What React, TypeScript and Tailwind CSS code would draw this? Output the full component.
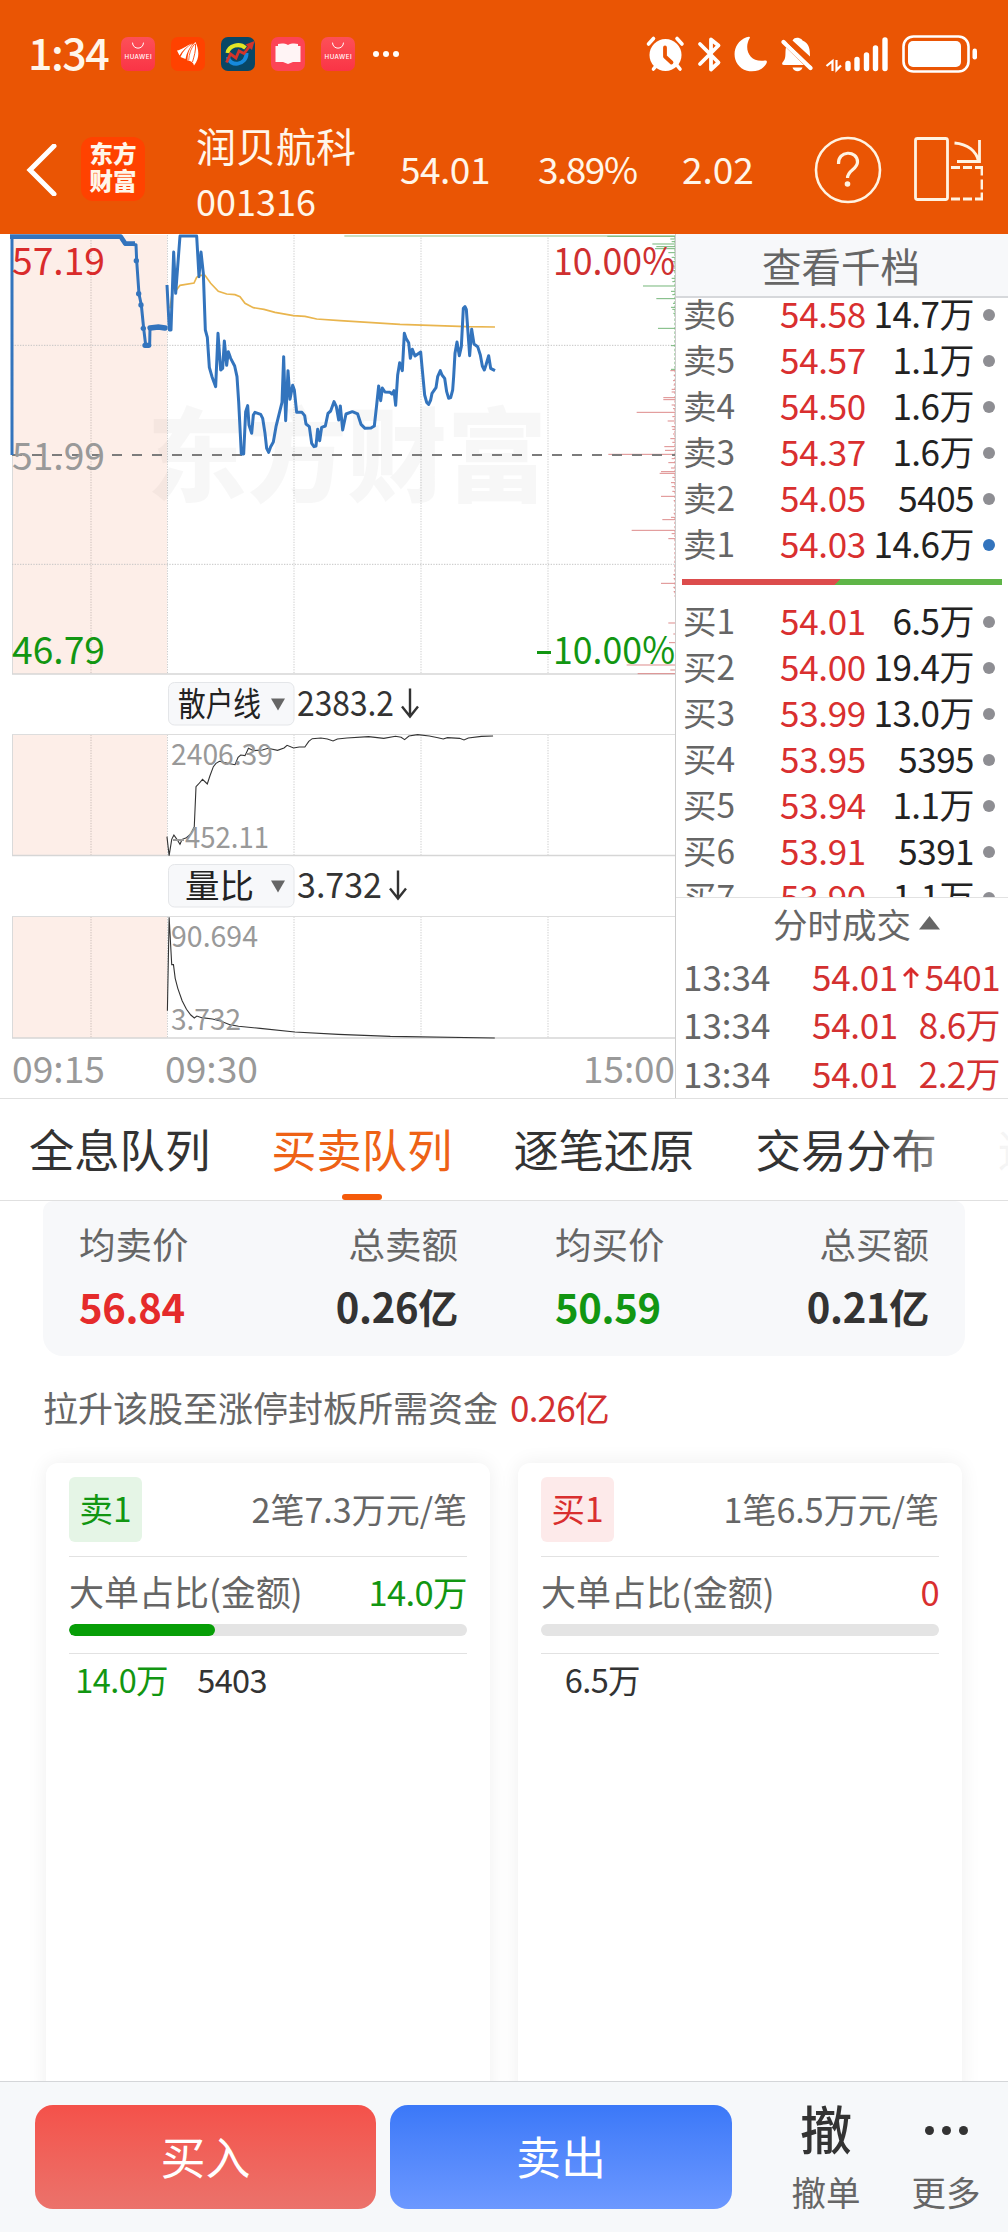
import React from "react";

const FONT = "font-['Noto_Sans_CJK_SC',sans-serif]";

type Level = { label: string; price: string; volume: string; active?: boolean };

const SELLS: Level[] = [
  { label: "卖6", price: "54.58", volume: "14.7万" },
  { label: "卖5", price: "54.57", volume: "1.1万" },
  { label: "卖4", price: "54.50", volume: "1.6万" },
  { label: "卖3", price: "54.37", volume: "1.6万" },
  { label: "卖2", price: "54.05", volume: "5405" },
  { label: "卖1", price: "54.03", volume: "14.6万", active: true },
];

const BUYS: Level[] = [
  { label: "买1", price: "54.01", volume: "6.5万" },
  { label: "买2", price: "54.00", volume: "19.4万" },
  { label: "买3", price: "53.99", volume: "13.0万" },
  { label: "买4", price: "53.95", volume: "5395" },
  { label: "买5", price: "53.94", volume: "1.1万" },
  { label: "买6", price: "53.91", volume: "5391" },
  { label: "买7", price: "53.90", volume: "1.1万" },
];

const TRADES = [
  { time: "13:34", price: "54.01", arrow: true, volume: "5401" },
  { time: "13:34", price: "54.01", arrow: false, volume: "8.6万" },
  { time: "13:34", price: "54.01", arrow: false, volume: "2.2万" },
];

/* Horizontal volume-by-price bars: [y, length] in thirds of a pixel. */
const GREEN_BARS: number[][] = [
  [19, 203], [27, 14], [35, 10], [42, 68], [50, 56], [56, 60], [68, 20], [82, 10], [95, 14], [108, 8], [122, 10],
  [145, 10], [155, 8], [168, 96], [184, 12], [194, 8], [206, 56], [220, 6], [232, 12], [238, 8], [250, 5],
  [295, 51], [347, 12], [418, 12],
];
const RED_BARS: number[][] = [
  [422, 14], [436, 4], [452, 6], [465, 4], [478, 10], [486, 10], [503, 35], [509, 35], [525, 10], [536, 6], [547, 115], [560, 8],
  [573, 22], [590, 10], [598, 8], [612, 6], [626, 14], [637, 8], [650, 32], [661, 30], [673, 200], [686, 10],
  [698, 20], [714, 12], [725, 42], [730, 46], [742, 8], [758, 12], [770, 10], [784, 8], [799, 42], [812, 4],
  [850, 4], [862, 12], [869, 38], [901, 130], [911, 10], [926, 20], [1034, 5], [1046, 4], [1060, 42], [1072, 5], [1085, 4],
  [1179, 20], [1212, 5], [1238, 18], [1305, 145], [1320, 14], [1331, 112],
];

function HuaweiIcon() {
  return (
    <svg className="size-[34px]" viewBox="0 0 34 34">
      <defs>
        <linearGradient id="hw" x1="0" y1="0" x2="0" y2="1">
          <stop offset="0" stopColor="#fd5058" />
          <stop offset="1" stopColor="#fa3446" />
        </linearGradient>
      </defs>
      <rect width="34" height="34" rx="7" fill="url(#hw)" />
      <path d="M11.5 6c.3 7 10.7 7 11 0" fill="none" stroke="#fff" strokeWidth="1" strokeLinecap="round" />
      <text x="3.6" y="22" fontSize="6.2" textLength="27" fontFamily="Inter, sans-serif" fontWeight="500" fill="#fff">HUAWEI</text>
    </svg>
  );
}

function StatusBar() {
  return (
    <div className="flex h-[108px] items-center pl-[28px] pr-[31px]">
      <div className="flex w-[93px] translate-y-[-3px] text-[43px] font-medium leading-none">
        <span className="tracking-[-1.5px]">1:34</span>
      </div>
      <div className="flex items-center gap-[16px]">
        <HuaweiIcon />
        <svg className="size-[34px]" viewBox="0 0 34 34">
          <rect width="34" height="34" rx="7" fill="#ff4200" />
          <path d="M6 13.500c4-.5 9-4.500 15-7-6 3.500-10 7.500-12.500 12Z" fill="#fff" />
          <path d="M9.500 20C12 14 16 9.500 22 6.500 18.500 10.500 15.500 16 14.500 22Z" fill="#fff" />
          <path d="M16.500 23.500C16.500 15 19.500 9.500 24.500 5c3 6.500 5 16-1.500 23.500-.5-3-3-4.500-6.500-5Z" fill="#fff" />
          <path d="M24 6.500c-4 4.500-6 10-6.300 17" stroke="#ff4200" strokeWidth=".8" fill="none" />
          <path d="M24.500 7c.5 7-1.500 12.500-3 18" stroke="#ff4200" strokeWidth=".9" fill="none" />
        </svg>
        <svg className="size-[34px]" viewBox="0 0 34 34">
          <rect width="34" height="34" rx="7" fill="#084766" />
          <path d="M6.500 16a10.500 9 0 0 1 18-5" fill="none" stroke="#e2e626" strokeWidth="4" />
          <path d="M25.500 16c0 13-17 14-18.500 4" fill="none" stroke="#1689dc" strokeWidth="4" />
          <path d="M5.500 25.500 9.500 17l5.500 4 3-7 5 2.500 7-9" fill="none" stroke="#d3342a" strokeWidth="2.800" />
          <path d="m33.500 4-2.500 9-6.500-5.500Z" fill="#d3342a" />
        </svg>
        <svg className="size-[34px]" viewBox="0 0 34 34">
          <rect width="34" height="34" rx="7" fill="#fc4456" />
          <path d="M4.500 9h2.500V7c3-.8 7-.8 10 1 3-1.800 7-1.800 10-1v2h2.500v16H22l-5 2-5-2H4.500Z" fill="#fff4f5" />
        </svg>
        <HuaweiIcon />
      </div>
      <div className="ml-[18px] flex gap-[4px]">
        <i className="size-[6px] rounded-full bg-white" />
        <i className="size-[6px] rounded-full bg-white" />
        <i className="size-[6px] rounded-full bg-white" />
      </div>
      <svg className="ml-auto h-[40px] w-[332px]" viewBox="645 33 332 40" fill="#fff">
        {/* alarm */}
        <circle cx="665.500" cy="54" r="16" />
        <path d="m648.500 43 5-5.500m28.500 5.500-5-5.500m-23.500 30.500 4-5m22.500 5-4-5" stroke="#fff" strokeWidth="3.600" strokeLinecap="round" />
        <path d="M665 46.500v9l6.500 6" fill="none" stroke="#ea5504" strokeWidth="3.800" strokeLinecap="round" strokeLinejoin="round" />
        {/* bluetooth */}
        <path d="m700 43 18.500 18.500-7.500 7V38.500l7.500 6L700 63" fill="none" stroke="#fff" strokeWidth="3.800" strokeLinecap="round" strokeLinejoin="round" />
        {/* moon */}
        <path d="M749.500 37.500c1.300-1.800-.5-2.400-3-1.200-16 6-16 28.500.5 33.500 9 2 16.500-1.800 19.500-7.500 1-2.300 0-3-2-2.700-15 2.200-21-11.600-15-22.100Z" />
        {/* muted bell */}
        <path d="M792.500 39.500c3-5.500 10-1.500 10 0 7 3 7.500 9 7.500 16Z" />
        <path d="M786 46.500 804 64h-20c-4-.5-.5-3.500.5-5.500 1.500-3 .5-8 1.500-12Z" />
        <path d="M792.500 66.500h10c-1.500 5-8.500 5-10 0Z" />
        <path d="m783.500 41 27 26" stroke="#fff" strokeWidth="4.400" strokeLinecap="round" />
        <path d="m788 41 23 22" stroke="#ea5504" strokeWidth="1.800" />
        {/* signal */}
        <path d="M832.500 70V60l-6 5m10-6v10l4.500-4.500" fill="none" stroke="#fff" strokeWidth="2.200" />
        <path d="M848 62.500v5M857 58.500v9M866.500 54v13.500M875.500 47v20.500M885 39v28.500" stroke="#fff" strokeWidth="5.400" strokeLinecap="round" />
        {/* battery */}
        <rect x="903.500" y="35.500" width="65" height="35" rx="10" fill="none" stroke="#fff" strokeWidth="2.600" />
        <rect x="908" y="40" width="53" height="26" rx="5" />
        <rect x="972.500" y="47.500" width="4.500" height="11" rx="2.200" />
      </svg>
    </div>
  );
}

function TitleBar() {
  return (
    <div className="flex h-[126px] items-center pb-[4px] pl-[26px] pr-[25px]">
      <svg className="h-[52px] w-[31px] translate-y-[1px]" viewBox="0 0 31 52" fill="none" stroke="#fff" strokeWidth="5">
        <path d="M28 2 4 26l24 24" strokeLinecap="round" />
      </svg>
      <div className="ml-[24px] flex size-[64px] flex-col items-center justify-center rounded-[12px] bg-[#ff4200] text-[23.500px] font-black leading-[27px]">
        <span className="translate-y-[-2px]">东方</span>
        <span className="translate-y-[-2px]">财富</span>
      </div>
      <div className="ml-[51px] flex w-[204px] translate-y-[3px] flex-col">
        <span className="text-[40px] leading-[56px]">润贝航科</span>
        <span className="text-[36px] leading-[54px]">001316</span>
      </div>
      <span className="w-[138px] text-[37px] tracking-[-0.500px]">54.01</span>
      <span className="w-[144px] text-[37px] tracking-[-1.500px]">3.89%</span>
      <span className="w-[132px] text-[37px]">2.02</span>
      <svg className="size-[68px] translate-y-[1px]" viewBox="0 0 68 68" fill="none" stroke="#fff3e2" strokeWidth="2.600">
        <circle cx="34" cy="34" r="32" />
        <path d="M24.500 28c-1-14 19-14 19-2 0 7.500-10 8-10 16" strokeWidth="3.200" />
        <circle cx="33.500" cy="48" r="2.800" fill="#fff3e2" stroke="none" />
      </svg>
      <svg className="ml-auto h-[66px] w-[70px]" viewBox="913 136 70 66" fill="none" stroke="#fff3e2" strokeWidth="2.800">
        <rect x="915.500" y="138.500" width="32" height="61" rx="2" />
        <path d="M954.500 143c13 1 22 8 24 18.500M979.500 140v21.500h-22.500" />
        <path d="M951 167.500h9m3 0h9m3 0h7v8m0 4v10m0 3v6.500h-7m-3 0h-9m-3 0h-9" />
      </svg>
    </div>
  );
}

type LabelProps = { x: number; y: number; w: number; size: number; fill: string; children: string };
function ChartLabel({ x, y, w, size, fill, children }: LabelProps) {
  return (
    <text x={x} y={y} fontSize={size} textLength={w} lengthAdjust="spacingAndGlyphs" fill={fill}>
      {children}
    </text>
  );
}

function Plot({ top, bottom }: { top: number; bottom: number }) {
  return (
    <g>
      <rect x="12" y={top} width="155" height={bottom - top} fill="#fdeee8" />
      {[91, 167.5, 294, 421, 548].map((x) => (
        <path key={x} d={`M${x} ${top}V${bottom}`} stroke="#000" strokeOpacity=".2" strokeDasharray="1.300 1.300" />
      ))}
      <path d={`M12.500 ${top}V${bottom}`} stroke="#dadada" />
      <path d={`M12 ${bottom}H675`} stroke="#d6d6d6" strokeWidth="1.600" />
    </g>
  );
}

function ParamPill({ y, name, x, w }: { y: number; name: string; x: number; w: number }) {
  return (
    <g>
      <rect x="168.500" y={y} width="125.500" height="42.500" rx="6" fill="#f7f8fa" stroke="#e4e6e9" />
      <ChartLabel x={x} y={y + 33} w={w} size={33} fill="#222">{name}</ChartLabel>
      <path d={`M271 ${y + 16}h14l-7 12Z`} fill="#666" />
    </g>
  );
}

const PRICE =
  "M36 675V20H360L376 42L408 44L410 92L417 192L424 225L431 295L437 345H449L450 294L475 292L497 294M501 165L508 300H513L521 66L527 190L540 18H590L597 140L603 66L610 130L616 300L622 322L628 412L636 440L647 470L654 310L662 420L668 415L673 333L680 406L685 365L692 385L704 408L711 440L716 515L724 672H731L737 545L743 527L747 585L755 610L760 555L765 547L782 553L788 565L795 610L800 655L806 667L812 650L820 636L828 590L846 517L851 380L857 572L864 422L870 508L878 466L883 480L890 547H906L914 557L918 582L928 590L935 640L942 650L948 648L953 598L959 632L965 592L976 588L984 550L992 543L1002 515L1009 530L1016 570L1021 528L1028 600L1038 552L1057 545L1073 552L1083 583L1095 595L1113 594L1123 588L1130 525L1136 468L1142 512L1147 474L1155 486L1170 487L1176 492L1182 482L1187 526L1193 435L1199 398L1207 422L1213 310L1218 325L1226 338L1231 385L1237 358L1245 378L1262 366L1266 410L1274 495L1280 517L1286 523L1292 510L1296 490L1308 473L1313 440L1321 422L1326 435L1334 445L1340 485L1346 505L1352 503L1358 480L1361 440L1365 370L1371 336L1378 377L1384 350L1390 235L1395 230L1399 238L1409 377L1415 298L1422 342L1433 350L1441 375L1447 408L1453 420L1458 405L1466 377L1472 415L1485 422";

function Charts() {
  return (
    <svg className={`block h-[864px] w-[675px] shrink-0 overflow-visible ${FONT}`} viewBox="0 234 675 864" fill="none">
      <Plot top={235} bottom={674} />
      <text x="147" y="494" fontSize="102" textLength="400" lengthAdjust="spacingAndGlyphs" fontWeight="900" fill="#000" fillOpacity=".033">东方财富</text>
      <g transform="translate(0 230) scale(.33333)">
        <path d="M36 346H2025M36 1003H2025" stroke="#c4c4c4" strokeWidth="3" strokeDasharray="4 4" />
        <path d="M1033 18H2025" stroke="#c9dfc2" strokeWidth="6" />
        {GREEN_BARS.map(([y, n]) => (
          <path key={y} d={`M${2025 - n} ${y}H2025`} stroke="#74b678" strokeWidth="3" />
        ))}
        {RED_BARS.map(([y, n]) => (
          <path key={y} d={`M${2025 - n} ${y}H2025`} stroke="#dd8b8b" strokeWidth="3" />
        ))}
        <path d="M2024 18V420" stroke="#7dbb80" strokeWidth="2" strokeDasharray="8 5" />
        <path d="M2024 420V1100" stroke="#dd9090" strokeWidth="2" strokeDasharray="7 6" />
        <path d="M36 675H2025" stroke="#7c7c7c" strokeWidth="6" strokeDasharray="30 30" />
        <path d="M510 235L520 165L528 182L540 166L582 159L590 142L600 136H615L632 160L655 184L680 192L705 194L720 200L735 220L760 233L792 238L825 247L880 257L915 259L950 267L1020 272L1200 283L1400 290L1485 291" stroke="#e9b54e" strokeWidth="5" />
        <path d={PRICE} stroke="#3374bd" strokeWidth="9" strokeLinejoin="round" />
        <path d="M30 20H362L376 41H405" stroke="#3374bd" strokeWidth="14" strokeLinejoin="round" />
        <path d="M450 294L475 291L495 294M435 346H446" stroke="#3374bd" strokeWidth="16" strokeLinecap="round" />
        {[[409, 92], [416, 191], [423, 225], [430, 295]].map(([x, y]) => (
          <circle key={x} cx={x} cy={y} r="8" fill="#3374bd" />
        ))}
      </g>
      <ChartLabel x={12} y={275} w={93} size={38} fill="#d92b2b">57.19</ChartLabel>
      <ChartLabel x={12} y={470} w={93} size={38} fill="#999">51.99</ChartLabel>
      <ChartLabel x={12} y={664} w={93} size={38} fill="#129612">46.79</ChartLabel>
      <ChartLabel x={553} y={275} w={122} size={38} fill="#cf3030">10.00%</ChartLabel>
      <path d="M537 652.500h14" stroke="#129612" strokeWidth="3" />
      <ChartLabel x={553} y={664} w={122} size={38} fill="#129612">10.00%</ChartLabel>

      <ParamPill y={682.5} name="散户线" x={178} w={83} />
      <ChartLabel x={297} y={716} w={97} size={35} fill="#333">2383.2</ChartLabel>
      <path d="M410 688.500v28m-8-10 8 10 8-10" stroke="#333" strokeWidth="2.400" />
      <Plot top={734.5} bottom={855.5} />
      <path d="M12 734.500H675" stroke="#ddd" />
      <g transform="translate(0 670) scale(.43365 .33333)">
        <path vectorEffect="non-scaling-stroke" d="M385 500L390 557L396 508L401 495L408 508L415 523L420 508L430 503L440 492L448 470L452 350L458 342L467 328L478 342L484 318L492 290L498 280L506 274L530 281L542 284L549 262L555 255L565 257L573 235L585 242L605 240L618 235L640 241L655 234L662 226L677 234L690 231H703L712 214L720 206L740 204L755 207L768 213L778 207L800 204L850 200L885 205L912 199L925 202L933 209L943 198L963 194L990 198L1010 203L1022 207L1032 203L1060 205L1070 210L1080 204L1110 199L1137 198" stroke="#333" strokeWidth="1.100" />
      </g>
      <ChartLabel x={171} y={765} w={102} size={29} fill="#999">2406.39</ChartLabel>
      <path d="M173 840h11" stroke="#999" strokeWidth="2" />
      <ChartLabel x={185} y={848} w={84} size={29} fill="#999">452.11</ChartLabel>

      <ParamPill y={864.5} name="量比" x={185} w={69} />
      <ChartLabel x={297} y={898} w={85} size={35} fill="#333">3.732</ChartLabel>
      <path d="M398 870.500v28m-8-10 8 10 8-10" stroke="#333" strokeWidth="2.400" />
      <Plot top={916.5} bottom={1038} />
      <path d="M12 916.500H675" stroke="#ddd" />
      <g transform="translate(0 670) scale(.43365 .33333)">
        <path vectorEffect="non-scaling-stroke" d="M386 1022L390 742L396 884H400L404 925L410 955L420 992L430 1018L440 1035L448 1044L454 1038L465 1043L490 1047L510 1054L530 1064L550 1069L600 1075L680 1086L780 1093L900 1099L1141 1104" stroke="#333" strokeWidth="1.100" />
      </g>
      <ChartLabel x={171} y={947} w={87} size={29} fill="#999">90.694</ChartLabel>
      <ChartLabel x={171} y={1030} w={70} size={29} fill="#999">3.732</ChartLabel>

      <ChartLabel x={12} y={1083} w={93} size={37} fill="#999">09:15</ChartLabel>
      <ChartLabel x={165} y={1083} w={93} size={37} fill="#999">09:30</ChartLabel>
      <ChartLabel x={583} y={1083} w={92} size={37} fill="#999">15:00</ChartLabel>
    </svg>
  );
}

function LevelRow({ level }: { level: Level }) {
  return (
    <div className="flex h-[46px] shrink-0 items-center pl-[7px] pr-[13px] text-[35px] leading-[46px]">
      <span className="w-[97px] -translate-y-[2px] text-[33.500px] text-[#666]">{level.label}</span>
      <span className="-translate-y-[2px] tracking-[-0.300px] text-[#d92f2f]">{level.price}</span>
      <span className="ml-auto mr-[9px] -translate-y-[2px] whitespace-nowrap tracking-[-0.500px] text-[#222]">{level.volume}</span>
      <i className={level.active ? "size-[12px] rounded-full bg-[#3374bd]" : "size-[12px] rounded-full bg-[#8e8e93]"} />
    </div>
  );
}

function OrderBook() {
  return (
    <div className="flex min-w-0 flex-1 flex-col border-l border-[#ccc]">
      <div className="flex h-[64px] items-center justify-center border-b-2 border-[#d6d8db] bg-[#f7f8fa] text-[39.500px] text-[#666]">
        <span className="-translate-x-[1px]">查看千档</span>
      </div>
      <div className="flex h-[599px] flex-col overflow-hidden">
        <div className="-mt-[6px] flex shrink-0 flex-col">
          {SELLS.map((l) => <LevelRow key={l.label} level={l} />)}
        </div>
        <div className="mb-[14px] ml-[6px] mr-[6px] mt-[11px] h-[6px] shrink-0 bg-[linear-gradient(135deg,#dc4c4c_48.500%,#5fb548_48.500%)]" />
        {BUYS.map((l) => <LevelRow key={l.label} level={l} />)}
      </div>
      <div className="flex h-[56px] items-center border-t border-[#e2e2e2] pl-[97px] text-[34.500px] text-[#666]">
        <span className="-translate-y-[1px]">分时成交</span>
        <svg className="ml-[8px] h-[14px] w-[21px] -translate-y-[2px]" viewBox="0 0 21 14"><path d="M10.500 0 21 13.500H0Z" fill="#666" /></svg>
      </div>
      {TRADES.map((t, i) => (
        <div key={i} className="flex h-[48.500px] items-center pl-[7px] pr-[8px] text-[35px] text-[#d33030]">
          <span className="w-[129px] -translate-y-[1px] text-[#666]">{t.time}</span>
          <span className="-translate-y-[1px] tracking-[-0.300px]">{t.price}</span>
          {t.arrow && (
            <svg className="ml-[5px] h-[22px] w-[16px]" viewBox="0 0 16 22" fill="none" stroke="#d92b2b" strokeWidth="2.800">
              <path d="M8 22V3M1 10l7-7 7 7" />
            </svg>
          )}
          <span className="ml-auto -translate-y-[1px] tracking-[-0.600px]">{t.volume}</span>
        </div>
      ))}
    </div>
  );
}

function Tabs() {
  return (
    <div className="relative flex h-[103px] gap-[61px] overflow-hidden whitespace-nowrap border-b border-t border-[#e0e0e0] pl-[29px] text-[45.300px] leading-[98px] text-[#333]">
      <span>全息队列</span>
      <span className="flex shrink-0 flex-col items-center text-[#ee6216]">
        <span>买卖队列</span>
        <i className="-mt-[3px] h-[6px] w-[40px] shrink-0 rounded-[3px] bg-[#f55a0a]" />
      </span>
      <span>逐笔还原</span>
      <span>交易分布</span>
      <span>逐笔</span>
      <i className="absolute inset-y-0 right-0 w-[126px] bg-linear-to-r from-white/0 to-white/95 to-95%" />
    </div>
  );
}

function Stat({ label, value, tone, right }: { label: string; value: string; tone: string; right?: boolean }) {
  return (
    <div className={right ? "flex flex-col items-end" : "flex flex-col items-start"}>
      <span className="text-[36.500px] leading-[62px] text-[#666]">{label}</span>
      <span className={`text-[40px] font-bold leading-[62px] tracking-[-0.300px] ${tone}`}>{value}</span>
    </div>
  );
}

type QueueProps = {
  tag: string;
  tagTone: string;
  summary: string;
  amount: string;
  tone: string;
  fill: number;
  items: { text: string; tone: string }[];
};

function QueueCard({ tag, tagTone, summary, amount, tone, fill, items }: QueueProps) {
  return (
    <div className="h-[640px] w-[444px] rounded-[12px] bg-white px-[23px] pt-[14px] text-[35px] text-[#666] shadow-[0_0_20px_rgba(0,0,0,0.07)]">
      <div className="flex h-[80px] items-start justify-between border-b border-[#e2e2e2]">
        <span className={`flex h-[65px] w-[73px] items-center justify-center rounded-[6px] text-[33.500px] ${tagTone}`}>
          <span className="-translate-y-[1px]">{tag}</span>
        </span>
        <span className="-translate-y-[1px] text-[34px] leading-[65px]">{summary}</span>
      </div>
      <div className="flex h-[67px] items-center justify-between">
        <span className="translate-y-[1px]">大单占比(金额)</span>
        <span className={`translate-y-[1px] text-[34.500px] tracking-[-0.600px] ${tone}`}>{amount}</span>
      </div>
      <div className="h-[12px] overflow-hidden rounded-full bg-[#e4e4e4]">
        <div className="h-full rounded-full bg-[#079e07]" style={{ width: `${fill}%` }} />
      </div>
      <div className="mt-[17px] flex border-t border-[#e2e2e2] text-[32.500px] leading-[49px]">
        {items.map((it) => (
          <span key={it.text} className={`w-[99px] text-right tracking-[-0.600px] ${it.tone}`}>{it.text}</span>
        ))}
      </div>
    </div>
  );
}

function BottomBar() {
  return (
    <div className="flex h-[151px] items-start border-t border-[#d4d6d9] bg-[#f6f8fa] pl-[35px] pt-[23px] text-white">
      <div className="flex h-[104px] w-[341px] items-center justify-center rounded-[18px] bg-linear-to-b from-[#f4514a] to-[#eb726b] text-[45px]">
        <span className="-translate-y-[1px]">买入</span>
      </div>
      <div className="ml-[14px] flex h-[104px] w-[342px] items-center justify-center rounded-[18px] bg-linear-to-b from-[#3b78f8] to-[#6c98ff] text-[45px]">
        <span className="-translate-y-[1px]">卖出</span>
      </div>
      <div className="ml-[42px] flex w-[104px] flex-col items-center">
        <span className="text-[52px] font-medium leading-[46px] text-[#333]">撤</span>
        <span className="mt-[15px] text-[34.500px] leading-[50px] text-[#666]">撤单</span>
      </div>
      <div className="ml-[16px] flex w-[104px] flex-col items-center">
        <div className="flex h-[51px] items-center gap-[8px]">
          <i className="size-[9px] rounded-full bg-[#333]" />
          <i className="size-[9px] rounded-full bg-[#333]" />
          <i className="size-[9px] rounded-full bg-[#333]" />
        </div>
        <span className="mt-[10px] text-[34.500px] leading-[50px] text-[#666]">更多</span>
      </div>
    </div>
  );
}

export default function App() {
  return (
    <div className={`flex h-[2232px] w-[1008px] flex-col overflow-hidden bg-white ${FONT}`}>
      <header className="h-[234px] shrink-0 bg-[#ea5504] text-[#fff6ea]">
        <StatusBar />
        <TitleBar />
      </header>
      <section className="flex h-[864px] shrink-0">
        <Charts />
        <OrderBook />
      </section>
      <Tabs />
      <main className="h-[880px] shrink-0 overflow-hidden">
        <div className="mx-[43px] flex h-[155px] justify-between rounded-b-[20px] rounded-t-[10px] bg-[#f7f8fa] px-[36px] pt-[12px]">
          <div className="flex w-[379px] justify-between">
            <Stat label="均卖价" value="56.84" tone="text-[#e52b2b]" />
            <Stat label="总卖额" value="0.26亿" tone="text-[#333]" right />
          </div>
          <div className="flex w-[374px] justify-between">
            <Stat label="均买价" value="50.59" tone="text-[#129612]" />
            <Stat label="总买额" value="0.21亿" tone="text-[#333]" right />
          </div>
        </div>
        <p className="ml-[43px] mt-[23px] flex h-[56px] items-center gap-[12px] text-[35px] text-[#666]">
          <span>拉升该股至涨停封板所需资金</span>
          <span className="tracking-[-0.800px] text-[#d33030]">0.26亿</span>
        </p>
        <div className="mt-[28px] flex gap-[28px] pl-[46px]">
          <QueueCard
            tag="卖1"
            tagTone="bg-[#e5f5e6] text-[#129612]"
            summary="2笔7.3万元/笔"
            amount="14.0万"
            tone="text-[#129612]"
            fill={36.6}
            items={[{ text: "14.0万", tone: "text-[#129612]" }, { text: "5403", tone: "text-[#333]" }]}
          />
          <QueueCard
            tag="买1"
            tagTone="bg-[#fdeaea] text-[#d92f2f]"
            summary="1笔6.5万元/笔"
            amount="0"
            tone="text-[#d92f2f]"
            fill={0}
            items={[{ text: "6.5万", tone: "text-[#333]" }]}
          />
        </div>
      </main>
      <BottomBar />
    </div>
  );
}
